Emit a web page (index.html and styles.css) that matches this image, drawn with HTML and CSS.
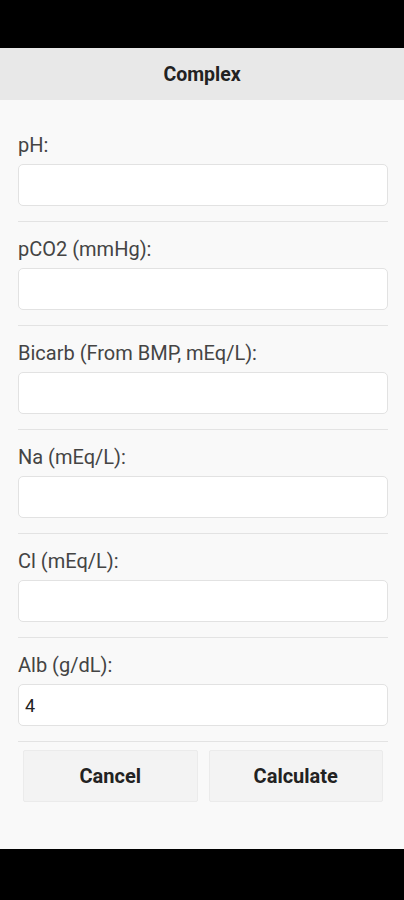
FILE: index.html
```html
<!DOCTYPE html>
<html lang="en">
<head>
    <meta charset="UTF-8">
    <meta name="viewport" content="width=device-width, initial-scale=1.0">
    <title>Complex</title>
    <link rel="stylesheet" href="styles.css">
</head>
<body>
    <div class="status-bar"></div>
    <div class="screen">
        <div class="header">Complex</div>
        <form class="calc-form">
            <div class="field">
                <label for="ph">pH:</label>
                <input type="text" id="ph">
            </div>
            <div class="field">
                <label for="pco2">pCO2 (mmHg):</label>
                <input type="text" id="pco2">
            </div>
            <div class="field">
                <label for="bicarb">Bicarb (From BMP, mEq/L):</label>
                <input type="text" id="bicarb">
            </div>
            <div class="field">
                <label for="na">Na (mEq/L):</label>
                <input type="text" id="na">
            </div>
            <div class="field">
                <label for="cl">Cl (mEq/L):</label>
                <input type="text" id="cl">
            </div>
            <div class="field">
                <label for="alb">Alb (g/dL):</label>
                <input type="text" id="alb" value="4">
            </div>
            <div class="actions">
                <button type="button">Cancel</button>
                <button type="button">Calculate</button>
            </div>
        </form>
    </div>
    <div class="nav-bar"></div>
</body>
</html>
```

FILE: styles.css
```css
body {
    margin: 0;
    background: #000;
    font-family: Roboto, "Liberation Sans", sans-serif;
    color: #222;
}
.status-bar {
    height: 48px;
}
.screen {
    height: 801px;
    background-color: #f9f9f9;
}
.header {
    height: 52px;
    background-color: #e8e8e8;
    display: flex;
    justify-content: center;
    align-items: center;
    font-size: 19.5px;
    font-weight: bold;
    color: #222;
}
.calc-form {
    padding: 18px 16px 0 18px;
}
.field {
    padding-top: 16px;
    padding-bottom: 15px;
    border-bottom: 1px solid #e3e3e3;
}
label {
    display: block;
    font-size: 20px;
    line-height: 22px;
    color: #444;
    margin-bottom: 8px;
}
input {
    display: block;
    box-sizing: border-box;
    width: 100%;
    height: 42px;
    padding: 0 6px;
    border: 1px solid #e2e2e2;
    border-radius: 5px;
    background: #fff;
    font-family: inherit;
    font-size: 18px;
    color: #222;
}
.actions {
    display: flex;
    gap: 11px;
    padding: 8px 5px 0 5px;
}
.actions button {
    flex: 1;
    height: 52px;
    background-color: #f3f3f3;
    border: 1px solid #ebebeb;
    border-radius: 2px;
    font-family: inherit;
    font-size: 20px;
    font-weight: bold;
    color: #222;
}
.nav-bar {
    height: 51px;
}
```
